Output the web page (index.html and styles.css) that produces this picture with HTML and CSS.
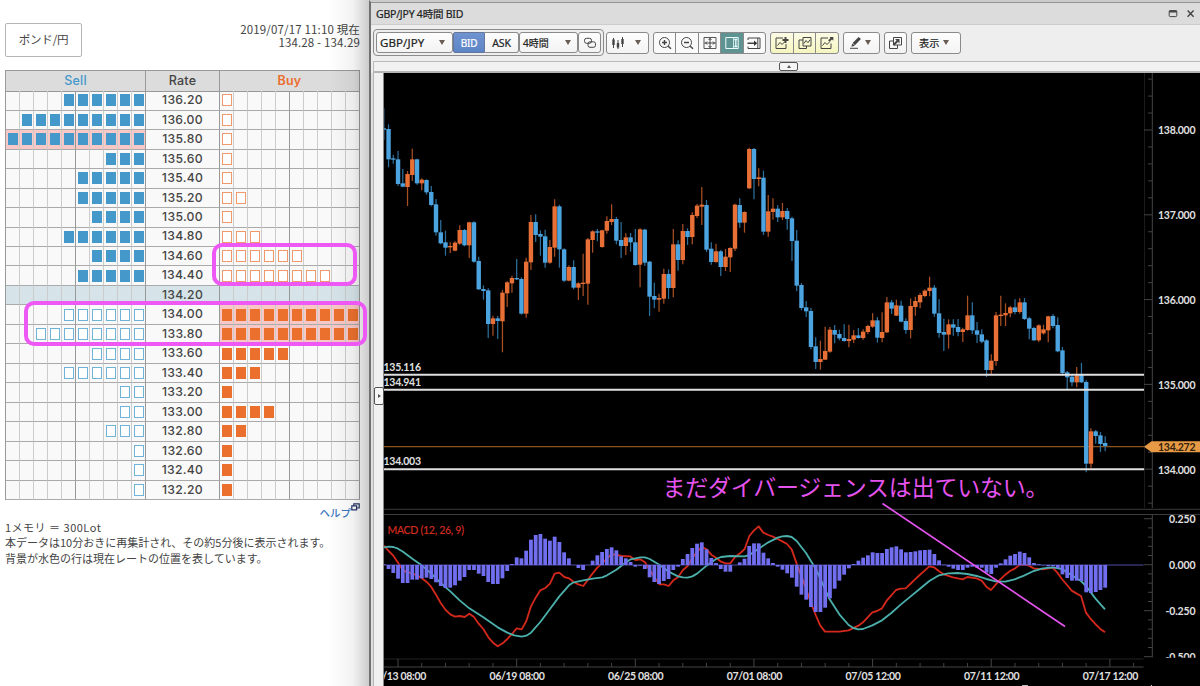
FILE: index.html
```html
<!DOCTYPE html>
<html lang="ja">
<head>
<meta charset="utf-8">
<title>GBP/JPY</title>
<link rel="stylesheet" href="styles.css">
</head>
<body>
<div class="screen">
  <section class="book">
    <header class="book-head">
      <button class="pair">ポンド/円</button>
      <div class="stamp"><div>2019/07/17 11:10 現在</div><div>134.28 - 134.29</div></div>
    </header>
    <div class="table">
      <div class="row head"><div class="th sell">Sell</div><div class="th">Rate</div><div class="th buy">Buy</div></div>
      <div id="rows"></div>
    </div>
    <div class="help"><a>ヘルプ</a><svg width="9" height="8" viewBox="0 0 9 8"><path d="M2.800 .8h5.400v4.200H2.800z" class="navy"/><path d="M.8 2.800h4.800v4H.8z" class="navy"/></svg></div>
    <div class="notes">
      <p class="n1">1メモリ ＝ 300Lot</p>
      <p class="n2">本データは10分おきに再集計され、その約5分後に表示されます。</p>
      <p class="n3">背景が水色の行は現在レートの位置を表しています。</p>
    </div>
    <div class="shade"></div>
    <div class="mark mark-a"></div>
    <div class="mark mark-b"></div>
  </section>

  <section class="window">
    <div class="titlebar">
      <span class="title">GBP/JPY 4時間 BID</span>
      <svg width="28" height="10" viewBox="0 0 28 10" class="ico"><rect x="1.200" y="1.600" width="7.600" height="6" rx="1"/><path d="M1.200 2.500h7.600" stroke-width="2"/><path d="M19.600 1.600l6 6.200M25.600 1.600l-6 6.200" stroke-width="1.400"/></svg>
    </div>
    <div class="toolbar">
      <div class="cluster">
        <div class="btn sel-pair"><span>GBP/JPY</span><i class="tri"></i></div>
        <div class="btn bid">BID</div>
        <div class="btn ask">ASK</div>
        <div class="btn sel-time"><span>4時間</span><i class="tri"></i></div>
        <div class="btn link"><svg class="ico" width="14" height="14" viewBox="0 0 14 14"><rect x="1.500" y="2.300" width="7" height="5" rx="2"/><rect x="5" y="5.800" width="7.500" height="5.500" rx="2"/></svg></div>
      </div>
      <div class="btn candles"><svg class="ico" width="14" height="14" viewBox="0 0 14 14"><path d="M2.500 2v10M7 4v9M11.500 1v10" stroke-width="1"/><path d="M2.500 3.500v5.500M7 7v4.500M11.500 3v5" stroke-width="2.400"/></svg><i class="tri"></i></div>
      <div class="group zoomers">
        <div><svg class="ico" width="14" height="14" viewBox="0 0 14 14"><circle cx="6.500" cy="6.500" r="5"/><path d="M4 6.500h5M6.500 4v5" stroke-width="1.500"/><path d="M10.200 10.200l2.800 2.600" stroke-width="1.500"/></svg></div>
        <div><svg class="ico" width="14" height="14" viewBox="0 0 14 14"><circle cx="6.500" cy="6.500" r="5"/><path d="M4 6.500h5" stroke-width="1.500"/><path d="M10.200 10.200l2.800 2.600" stroke-width="1.500"/></svg></div>
        <div><svg class="ico" width="14" height="14" viewBox="0 0 14 14"><path d="M1 1.500h12v11H1z" stroke-width=".9"/><path d="M7 2v10M1.500 7h11M5.500 4L7 2.500 8.500 4M5.500 10L7 11.500 8.500 10M4 5.500L2.500 7 4 8.500M10 5.500L11.500 7 10 8.500"/></svg></div>
        <div class="on"><svg class="ico" width="14" height="14" viewBox="0 0 14 14"><path d="M.8 1.500h12.400v11H.8z"/><path d="M8.500 1.500v11" stroke-width=".8"/><path d="M9.300 3.500h3M9.300 10.500h3M10.800 3.500v7" stroke-width="1.300"/></svg></div>
        <div><svg class="ico" width="14" height="14" viewBox="0 0 14 14"><path d="M1 4V2h12v10.500H1v-2M10.800 2v10.500"/><path d="M.5 7.200h8" stroke-width="1.600"/><path d="M7 4.500L10.300 7.200 7 9.900z" fill="#333" stroke="none"/></svg></div>
      </div>
      <div class="group yellow">
        <div><svg class="ico" width="14" height="14" viewBox="0 0 14 14"><path d="M8 2H1v10.500h10V8M2.500 9.500l2.500-3 2 2 3-3"/><path d="M10.500 1v6M7.500 4h6" stroke-width="1.900"/></svg></div>
        <div><svg class="ico" width="14" height="14" viewBox="0 0 14 14"><path d="M5 4H1v8.500h7.500V10"/><path d="M5 1.500h8V10H5zM6 7.500L8 4.500l2 2.200 2-3"/></svg></div>
        <div><svg class="ico" width="14" height="14" viewBox="0 0 14 14"><path d="M8 2H1v10.500h10V7.500M2.500 9.500l2.500-3 2 2 3-3"/><path d="M8.800 5L12 2" stroke-width="1.900"/><path d="M9.500 1H13.300V4.800z" fill="#444" stroke="none"/></svg></div>
      </div>
      <div class="btn pencil"><svg class="ico" width="13" height="14" viewBox="0 0 13 14"><path d="M4.800 8.200L10.800 2" stroke-width="3.200"/><path d="M3.400 7.400l2.500 2.400-3.600 1z" fill="#444" stroke="none"/><path d="M1 12.300h8"/></svg><i class="tri"></i></div>
      <div class="btn pop"><svg class="ico" width="15" height="14" viewBox="0 0 15 14"><path d="M5.500 1.500h8v7.500h-8zM5.500 5H1.500v7.500h8V9"/><path d="M5.500 9L9.500 5" stroke-width="1.900"/><path d="M7 3h4.500v4.500z" fill="#444" stroke="none"/></svg></div>
      <div class="btn show"><span>表示</span><i class="tri"></i></div>
    </div>
    <div class="strip"><div class="fold"><i></i></div></div>
    <div class="stage">
      <div class="side"><div class="unfold"><i></i></div></div>
      <svg class="chart" viewBox="384 73 816 613" id="chart">
        <g class="axis">
          <path d="M1144.500 73V508" opacity=".4"/>
          <path d="M1152.300 73V508M1152.300 515V657.500M384 667H1143.500"/>
          <path d="M384 509.300H1200M384 514.500H1200" class="divider"/>
          <path d="M384 659H1143.500" opacity=".5"/>
          <g id="ticks"></g>
        </g>
        <path d="M384 446.600H1144" class="now"/>
        <g id="candles"></g>
        <path d="M384 374.800H1144M384 389.800H1144M384 469.200H1144" class="level"/>
        <g class="lbl">
          <text x="383.500" y="370.500" textLength="37.500">135.116</text>
          <text x="383.500" y="385.500" textLength="37.500">134.941</text>
          <text x="383.500" y="465" textLength="37.500">134.003</text>
          <text x="1158" y="134" textLength="37.500">138.000</text>
          <text x="1158" y="218.700" textLength="37.500">137.000</text>
          <text x="1158" y="303.500" textLength="37.500">136.000</text>
          <text x="1158" y="388.700" textLength="37.500">135.000</text>
          <text x="1158" y="473.500" textLength="37.500">134.000</text>
          <text x="1169" y="522.700" textLength="26.500">0.250</text>
          <text x="1169" y="569.300" textLength="26.500">0.000</text>
          <text x="1165.500" y="615.300" textLength="30">-0.250</text>
          <svg x="1155" y="640" width="45" height="17.800" viewBox="1155 640 45 17.800"><text x="1165.500" y="661" textLength="30">-0.500</text></svg>
          <g id="times"></g>
        </g>
        <path d="M1144 446.700L1151.500 441.300H1200V452.200H1151.500Z" fill="#e69a45"/>
        <text x="1158" y="451" textLength="37.500" class="nowlbl">134.272</text>
        <text x="387.500" y="533.700" textLength="76.500" class="macdlbl">MACD (12, 26, 9)</text>
        <g transform="translate(370 505) scale(.33333)" class="lines">
          <polyline class="macd" id="macd"/>
          <polyline class="signal" id="signal"/>
        </g>
        <path d="M384 565H1143.500" class="zero"/>
        <g id="bars"></g>
        <path d="M882.500 503.500L1065 626.500" class="pen"/>
        <text x="662.500" y="496" textLength="386" class="memo">まだダイバージェンスは出ていない。</text>
        <path d="M1022 685.500h6M1151 685.500h1" stroke="#bbb"/>
      </svg>
    </div>
  </section>
</div>
<script src="app.js"></script>
</body>
</html>
```
FILE: styles.css
```css
* { box-sizing: border-box; }
body { margin: 0; background: #fff; font-family: "Noto Sans", "Noto Sans CJK JP", sans-serif; color: #444; }
.screen { display: flex; width: 1200px; height: 686px; overflow: hidden; }

.book { position: relative; width: 369px; flex: none; padding: 23px 9px 0 5px; background: #fff; font-family: "Noto Sans CJK JP", sans-serif; }
.book-head { display: flex; justify-content: space-between; height: 46.500px; }
.pair { width: 77px; height: 34px; padding: 0 0 3px; border: 1px solid #b5b5b5; border-radius: 2px; background: #fff; color: #444; font: 11.500px "Noto Sans CJK JP", sans-serif; letter-spacing: -.2px; }
.stamp { text-align: right; font-size: 11.500px; line-height: 13.500px; letter-spacing: .15px; margin-top: -.5px; }
.table { width: 355px; border-left: 1px solid #999; border-top: 1px solid #999; }
.row { display: grid; grid-template-columns: 140px 74px 140px; height: 19.480px; background: #f9f9f9; }
.row.head { height: 20.700px; background: #dcdcdc; }
.th { border-right: 1px solid #999; border-bottom: 1px solid #999; text-align: center; font: 500 12.500px/20px Inter, sans-serif; letter-spacing: .2px; }
.sell { color: #4598cb; }
.buy { color: #ec6d2c; font-weight: 600; }
.rate { border-right: 1px solid #999; border-bottom: 1px solid #aaa; text-align: center; font: 500 12.200px/18.500px Inter, sans-serif; letter-spacing: .3px; }
.side-cells { display: grid; grid-template-columns: repeat(10, 1fr); }
.cell { display: flex; align-items: center; justify-content: center; border-right: 1px solid #ccc; border-bottom: 1px solid #aaa; }
.cell:nth-child(5), .cell:nth-child(10) { border-right-color: #999; }
.row.current { background: #d6e4e9; }
.hot .cell { background: #f8c8c6; }
.cell i { width: 10px; height: 12px; flex: none; background: #fff; margin-left: 1px; }
.s i.full { background: #4598ca; }
.s i.open { border: 1px solid #6fb3d9; }
.b i.full { background: #ec702d; }
.b i.open { border: 1px solid #f09a6c; }
.cell i.none { display: none; }
.help { display: flex; justify-content: flex-end; align-items: flex-start; height: 20px; padding-top: 3px; font-size: 10.500px; font-weight: 500; line-height: 20px; color: #3d78c0; }
.navy { stroke: #253466; stroke-width: 1.200; fill: #fff; }
.notes p { margin: 0; font-size: 11px; line-height: 15.300px; white-space: nowrap; }
.n1 { letter-spacing: .5px; }
.shade { position: absolute; right: 0; top: 0; width: 40px; height: 686px; background: linear-gradient(90deg, rgba(0,0,0,0), rgba(0,0,0,.05) 60%, rgba(0,0,0,.2)); }
.mark { position: absolute; border: 4px solid #ee58f5; border-radius: 10px; z-index: 2; }
.mark-a { left: 212px; top: 243px; width: 145px; height: 43px; }
.mark-b { left: 24px; top: 301px; width: 343px; height: 44.500px; }

.window { flex: 1; min-width: 0; display: flex; flex-direction: column; border-left: 2px solid #70706f; background: #ededed; border-top: 2px solid #ccc; }
.titlebar { display: flex; justify-content: space-between; align-items: center; height: 23px; padding: 0 4px 0 5px; background: #dcdcdc; border-top: 1px solid #929693; border-bottom: 1px solid #ccc; }
.title { font-size: 10.500px; color: #222; letter-spacing: -.22px; -webkit-text-stroke: .2px #222; white-space: nowrap; margin-top: -1px; }
.ico { fill: none; stroke: #444; stroke-width: 1; display: block; }
.toolbar { display: flex; align-items: center; height: 36px; padding: 0 0 1px 2px; background: #eee; font-size: 11px; color: #222; }
.cluster { display: flex; width: 231px; height: 27px; padding: 2px; border: 1px solid #8c8c8c; border-radius: 4px; margin-right: 2px; }
.btn { display: flex; align-items: center; justify-content: space-between; height: 22px; border: 1px solid #8a8a8a; border-radius: 3px; background: linear-gradient(#fdfdfd, #f3f3f3); white-space: nowrap; -webkit-text-stroke: .2px currentColor; }
.btn span { margin-top: -1px; }
.cluster .btn { height: 21px; }
.tri { border: 3px solid transparent; border-top: 5px solid #695c55; border-bottom: 0; width: 0; }
.sel-pair { width: 77px; padding: 0 7px 0 3px; font-size: 11.500px; letter-spacing: .1px; }
.bid { width: 32px; justify-content: center; font-size: 10px; letter-spacing: -.3px; background: linear-gradient(#7093d0, #5c85c7); color: #fff; border-radius: 2px 0 0 2px; border-color: #66769a; }
.ask { width: 34px; justify-content: center; font-size: 10.500px; letter-spacing: -.2px; border-left: 0; border-radius: 0 3px 3px 0; }
.sel-time { width: 59px; padding: 0 6px 0 3px; font-size: 10px; }
.link { flex: 1; justify-content: center; }
.candles { width: 43px; padding: 0 7px 0 4px; margin-right: 4px; }
.group { display: flex; height: 22px; border: 1px solid #8a8a8a; border-radius: 3px; background: #fafafa; overflow: hidden; }
.group div { flex: 1; display: flex; align-items: center; justify-content: center; border-right: 1px solid #8a8a8a; }
.group div:last-child { border-right: 0; }
.zoomers { width: 113px; margin-right: 4px; }
.group .on { background: #5f9391; }
.on .ico { stroke: #e8ffff; }
.yellow { width: 69px; background: linear-gradient(#fcfce6, #f5f5bf); margin-right: 4px; }
.pencil { width: 37px; padding: 0 8px 0 5px; margin-right: 4px; }
.pop { width: 23px; justify-content: center; margin-right: 4px; }
.show { width: 50px; padding: 0 11px 0 7px; font-size: 10.200px; }
.strip { height: 12px; margin-left: 2px; border: 1px solid #bbb; border-bottom: 2px solid #b5b5b5; border-right: 0; background: #f1f1f1; display: flex; padding-left: 405px; }
.fold { width: 19px; height: 9px; border: 1px solid #555; border-radius: 2px; background: #f6f6f6; display: flex; align-items: center; justify-content: center; }
.fold i { border: 2.500px solid transparent; border-bottom: 3px solid #555; border-top: 0; }
.stage { flex: 1; display: flex; min-height: 0; }
.side { width: 13px; padding: 314px 0 0 3px; background: linear-gradient(90deg, #ddd 2px, #b5b5b5 2px, #b5b5b5 3px, #f0f0f0 3px); border-right: 1px solid #888; flex: none; }
.unfold { width: 10px; height: 18px; border: 1px solid #555; border-radius: 2px; background: #f6f6f6; display: flex; align-items: center; justify-content: center; }
.unfold i { border: 2px solid transparent; border-left: 3px solid #555; border-right: 0; }
.chart { display: block; width: 816px; height: 613px; flex: none; background: #000; }

.axis { stroke: #444; fill: none; }
.divider { stroke: #3c3c3c; }
.now { stroke: #8a541c; stroke-width: 1.300; }
.level { stroke: #e0e0e0; stroke-width: 2; }
.lbl { fill: #e0e0e0; font: 700 10.500px Lato, sans-serif; }
.nowlbl { fill: #33220c; font: 700 10.500px Lato, sans-serif; }
.macdlbl { fill: #d02c1f; stroke: #d02c1f; stroke-width: .2; font: 400 10.500px Lato, sans-serif; }
.up { fill: #e86f35; stroke: #a84f24; }
.down { fill: #4ba3e0; stroke: #2d6f9c; }
.up line, .down line { stroke-width: 1.250; }
.up rect, .down rect { stroke: none; }
.lines polyline { fill: none; stroke-width: 5.500; stroke-linejoin: round; }
.lines .macd { stroke: #d3281b; }
.lines .signal { stroke: #4bafab; }
.zero { stroke: #4f4da6; stroke-width: 1.200; }
.bar { fill: #716ff0; }
.pen { stroke: #e553ee; stroke-width: 1.700; }
.memo { fill: #e553ee; font: 400 23px "Noto Sans CJK JP", sans-serif; }
```
FILE: app.js
```js
const $ = id => document.getElementById(id);

// Order book: rate, sell count, buy count, highlighted side
const book = [
  ['136.20',6,1],['136.00',9,1],['135.80',10,1,'s'],['135.60',3,1],['135.40',5,1],['135.20',5,2],['135.00',4,1],
  ['134.80',6,3],['134.60',4,6],['134.40',5,8],['134.20',0,0],['134.00',6,10,'b'],['133.80',8,10,'b'],['133.60',4,5],
  ['133.40',6,3],['133.20',2,1],['133.00',2,4],['132.80',3,2],['132.60',1,1],['132.40',1,1],['132.20',1,1]];
const cells = (test, kind) => Array.from({length: 10}, (_, i) =>
  `<div class="cell"><i class="${test(i) ? kind : 'none'}"></i></div>`).join('');
$('rows').innerHTML = book.map(([rate, s, b, hot], r) => `<div class="row ${r === 10 ? 'current' : ''}">
  <div class="side-cells s ${hot === 's' ? 'hot' : ''}">${cells(i => i >= 10 - s, r < 10 ? 'full' : 'open')}</div>
  <div class="rate">${rate}</div>
  <div class="side-cells b ${hot === 'b' ? 'hot' : ''}">${cells(i => i < b, r < 10 ? 'open' : 'full')}</div></div>`).join('');

// Candles: high, body top, body bottom, low in thirds of a pixel below the segment's base
const step = 4.746, left = 383.8;
const segments = [
[70, `B115,175,179,210 B163,177,268,292 B254,265,269,281 B243,268,342,348 B297,340,350,352 O303,312,351,408 O236,268,315,333 B266,268,340,344 O325,329,340,361 B328,330,367,374 B348,366,405,409 B387,403,487,497 B450,487,520,523 B482,517,533,557 O517,528,532,549 O514,518,542,544 O466,480,521,524 B477,480,526,529 O455,457,526,564 B454,457,575,578 B560,573,658,660 B646,657,663,689 B655,661,762,804 O737,745,762,797 B738,745,753,807 O660,668,754,847 O634,637,670,711 O617,624,640,668 B567,624,628,630 B622,627,731,734 O563,575,731,743 O435,456,577,600 B433,456,495,516 B481,492,500,557 B479,499,578,593 O510,531,578,581 O388,409,533,560 B404,409,538,593 B535,538,632,636 O586,591,632,634 B571,591,653,658 O637,640,653,690 O551,638,642,678 O504,508,641,704 O481,484,510,548 B477,484,488,514 O479,481,531,533 O439,453,482,491 O403,447,456,465 B441,447,512,523 B456,510,528,564 O490,502,528,555 B489,502,517,545 B477,517,585,587`],
[130, `O295,298,404,472 B296,299,398,408 B393,395,500,558 B458,498,509,535 O491,504,509,545 O416,432,506,521 B418,432,474,507 O297,343,474,502 B331,343,390,422 O282,303,390,403 B295,303,321,345 O247,255,321,343 O222,227,258,264 O171,224,230,285 B210,225,359,366 B337,356,396,404 O341,364,396,398 B360,364,411,438 O357,380,411,423 O352,354,382,426 O221,224,356,363 B205,225,278,293 O244,246,278,308 O53,57,175,177 B54,57,147,208 O115,142,147,169 B122,143,305,315 O195,244,305,320 O205,236,246,269 B226,236,262,276 O219,243,262,270 B234,243,267,299 B260,265,333,393 B300,332,467,484 B459,465,534,541 B513,532,544,561 B533,543,651,658 B622,649,696,717 O632,687,696,719 O590,663,689,690 O591,599,665,668 B585,600,614,640 B599,612,625,631 B583,624,633,635 O584,627,633,652 O600,616,629,639 B594,616,624,626 O598,605,624,629 O584,588,606,612`],
[190, `O370,391,410,413 B381,391,443,458 O367,426,444,457 O321,337,427,429 B330,337,356,372 O329,346,377,378 B332,347,395,397 B385,393,420,431 O325,348,420,445 O320,333,351,377 O309,315,337,355 O298,302,318,322 O260,293,303,319 B285,293,371,380 B328,370,429,443 B386,426,434,483 O388,403,434,476 B388,403,413,437 B387,411,426,439 O413,418,426,456 O317,376,420,422 B337,376,421,432 B396,421,434,459 B418,433,455,460 B448,451,540,561 O493,512,540,555 O366,376,513,527 O317,374,378,408 O340,369,376,408 O348,352,370,382 B328,352,366,373 O325,337,366,371 B324,337,387,390 B380,385,416,448 B410,414,451,453 O403,406,451,456 O404,418,430,434 O377,379,421,457 B372,378,408,415 B382,405,484,487 B471,481,549,557 B543,547,562,598 B555,560,577,589 O531,556,577,592 B519,553,577,579 B570,576,821,847 O715,724,821,833 B720,724,738,761 B726,736,762,786 B739,759,768,784`]];
let n = 0, out = '';
for (const [base, list] of segments) for (const c of list.split(' ')) {
  const [h, t, b, l] = c.slice(1).split(',').map(v => base + v / 3);
  const x = left + step * n++;
  out += `<g class="${c[0] === 'O' ? 'up' : 'down'}"><line x1="${x}" x2="${x}" y1="${h}" y2="${l}"/><rect x="${x - 2.2}" y="${t}" width="4.4" height="${Math.max(b - t, 1.3)}"/></g>`;
}
$('candles').innerHTML = out;

// MACD histogram, thirds of a pixel from the zero line
const hist = [2,-12,-24,-41,-54,-54,-44,-44,-40,-38,-42,-52,-63,-69,-68,-61,-47,-36,-15,-15,-26,-33,-51,-57,-57,-40,-18,3,23,20,43,76,90,93,79,73,85,69,38,20,0,-9,-15,0,13,29,39,48,53,44,26,20,9,-5,-2,-12,-37,-51,-57,-48,-42,-15,-5,18,33,51,64,68,47,21,6,-12,-20,-20,0,8,19,57,65,65,37,20,6,-5,-14,-25,-38,-65,-89,-104,-126,-141,-141,-128,-100,-71,-47,-29,-10,3,13,22,29,38,36,36,48,53,56,47,38,39,41,44,45,46,33,14,1,-5,-11,-15,-15,-8,-5,-8,-8,-23,-27,-8,5,17,28,33,40,36,23,6,2,-1,-4,-4,-10,-28,-39,-47,-47,-48,-82,-84,-81,-75,-68];
$('bars').innerHTML = hist.map((v, i) => `<rect class="bar" x="${left + step * i - 1.9}" y="${565 - Math.max(v, 0) / 3}" width="3.8" height="${Math.abs(v) / 3}"/>`).join('');

// Line points: first list from the left edge, second list continues 1230 units further right
const join = (a, b) => a + ' ' + b.split(' ').map(p => { const [x, y] = p.split(','); return (+x + 1230) + ',' + y; }).join(' ');
$('macd').setAttribute('points', join(
'42,122 56,138 70,152 84,173 99,196 113,202 127,205 141,211 155,219 170,231 184,246 198,269 212,294 227,315 241,328 255,335 269,333 284,336 298,326 312,336 326,356 340,372 355,397 369,413 383,424 398,415 412,402 426,387 440,370 455,373 469,348 483,304 497,278 511,256 526,249 540,236 554,206 568,203 583,216 597,220 611,231 625,238 640,243 654,224 668,205 682,188 697,174 711,160 725,148 739,149 754,153 780,154 796,165 811,163 825,172 839,195 853,217 868,238 882,238 896,243 910,226 924,217 939,195 953,183 967,160 981,140 996,126 1010,133 1024,149 1038,158 1053,170 1067,175 1081,175 1095,156 1110,145 1124,132 1138,93 1152,76 1166,64 1180,83 1195,90 1209,95 1223,102',
'7,109 21,117 35,133 50,176 64,213 78,250 92,292 107,330 121,362 135,380 178,380 206,376 235,362 249,352 263,337 277,322 291,318 306,310 320,287 334,271 348,255 362,251 377,250 391,237 405,223 419,210 434,197 448,184 462,187 477,199 491,208 519,217 548,223 562,216 590,220 605,227 619,245 633,255 647,239 661,223 676,209 690,198 704,191 718,180 732,179 747,182 761,190 789,193 818,188 832,203 846,222 861,240 875,257 889,265 903,273 918,323 932,342 946,357 960,371 975,382'));
$('signal').setAttribute('points', join(
'42,127 56,125 70,126 84,131 99,140 127,161 155,181 184,206 212,234 241,259 269,286 298,310 340,337 383,367 412,383 433,391 455,395 469,392 483,383 511,351 540,312 568,274 597,241 611,232 640,226 668,221 697,217 711,211 739,194 768,172 782,163 811,157 825,157 839,162 868,179 896,200 924,214 939,217 953,218 967,214 981,206 1010,182 1038,162 1053,156 1081,153 1124,154 1138,150 1166,131 1195,112 1223,98',
'7,94 21,93 35,96 50,108 78,144 107,191 121,221 149,283 178,328 206,360 220,369 235,373 249,372 277,361 306,346 334,324 362,299 391,275 419,252 448,228 477,211 505,205 533,204 562,207 590,213 619,222 647,229 676,230 704,223 732,212 761,198 789,190 818,187 846,192 861,202 903,228 918,243 946,280 975,313'));

// Axis ticks and time labels
let d = '';
for (let k = -3; k <= 22; k++) { const y = 130 + k * 16.96; d += `M${k % 5 ? 1148 : 1144} ${y}H1152`; }
for (let k = 0; k <= 15; k++) { const y = 518.7 + k * 9.2; d += `M${k % 5 ? 1148 : 1144} ${y}H1152`; }
for (let k = 0; k <= 31; k++) { const x = 398 + k * 23.73; if (x < 1143) d += `M${x} ${k % 5 ? 663 : 659}V667`; }
$('ticks').innerHTML = `<path d="${d}"/>`;
$('times').innerHTML = ['06/13 08:00','06/19 08:00','06/25 08:00','07/01 08:00','07/05 12:00','07/11 12:00','07/17 12:00']
  .map((t, i) => `<text x="${370.8 + i * 118.66}" y="680" textLength="55.5">${t}</text>`).join('');
```
